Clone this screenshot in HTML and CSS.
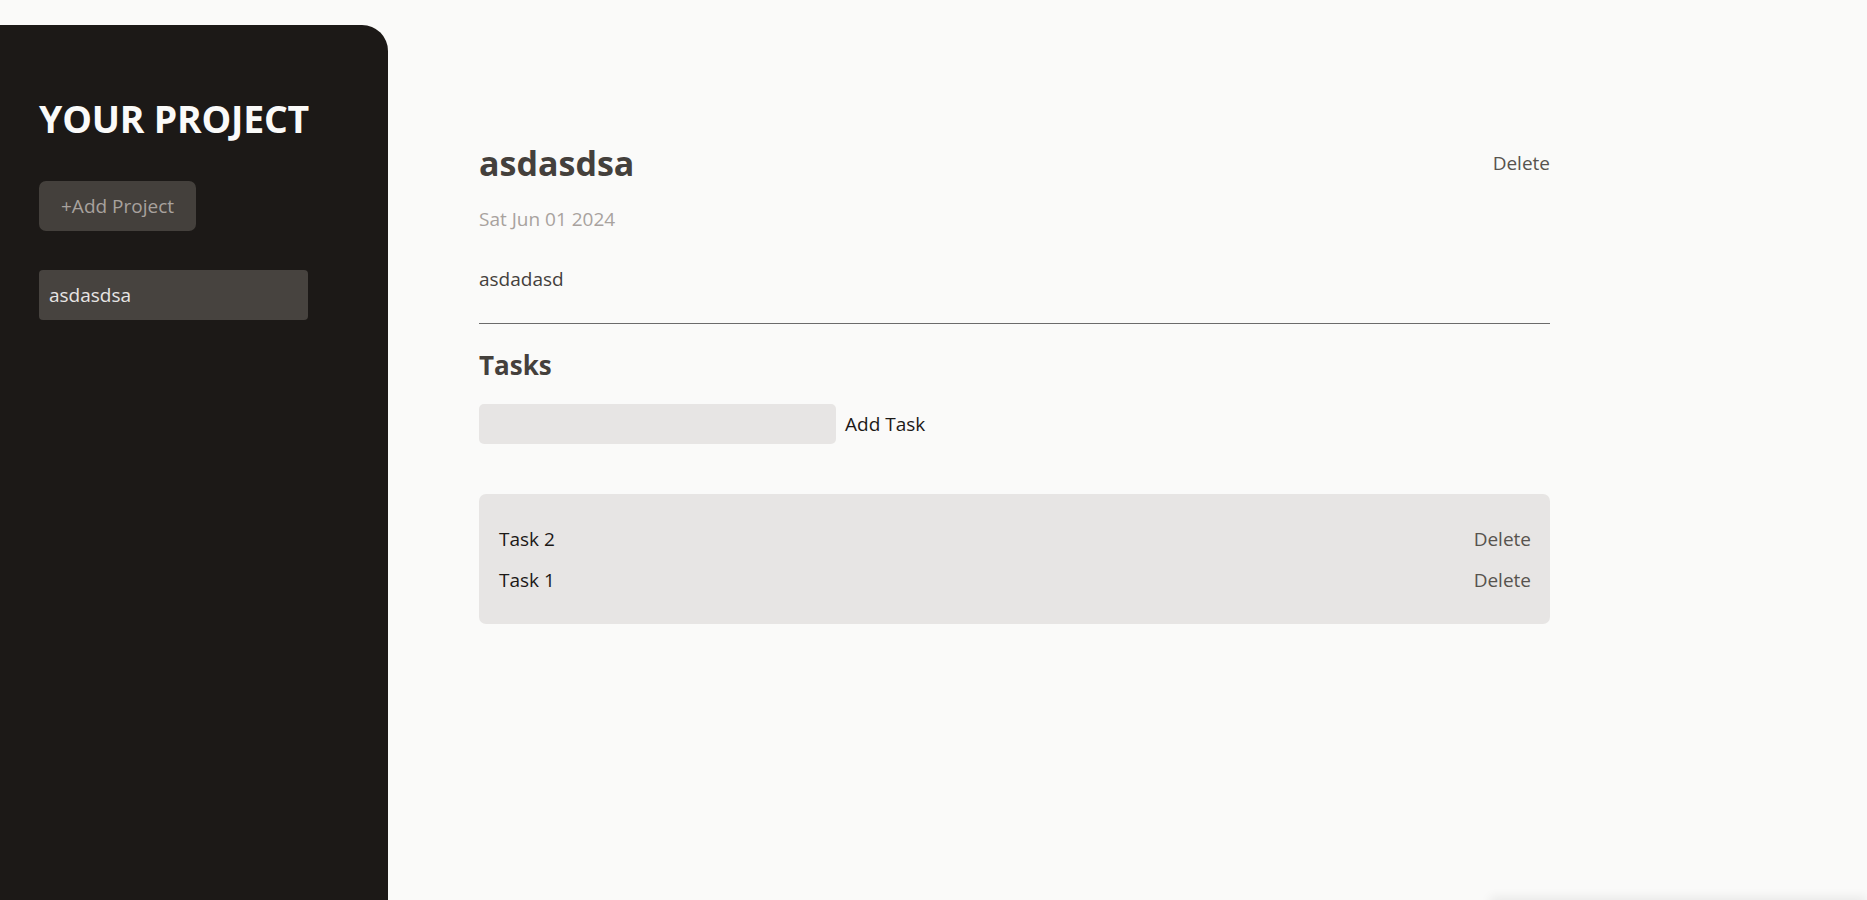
FILE: index.html
```html
<!DOCTYPE html>
<html lang="en">
<head>
<meta charset="utf-8">
<title>Project Manager</title>
<link rel="stylesheet" href="styles.css">
</head>
<body>
<div class="app">
  <aside class="sidebar">
    <h2 class="sidebar-title">YOUR PROJECT</h2>
    <button class="add-project">+Add Project</button>
    <ul class="project-list">
      <li><button class="project-item">asdasdsa</button></li>
    </ul>
  </aside>
  <main class="content">
    <header class="project-header">
      <div class="title-row">
        <h1 class="project-title">asdasdsa</h1>
        <button class="link-btn">Delete</button>
      </div>
      <p class="project-date">Sat Jun 01 2024</p>
      <p class="project-desc">asdadasd</p>
    </header>
    <section class="tasks">
      <h2 class="tasks-title">Tasks</h2>
      <div class="new-task">
        <input class="task-input" type="text">
        <button class="add-task">Add Task</button>
      </div>
      <ul class="task-list">
        <li class="task"><span>Task 2</span><button class="link-btn small">Delete</button></li>
        <li class="task"><span>Task 1</span><button class="link-btn small">Delete</button></li>
      </ul>
    </section>
  </main>
</div>
<div class="offscreen-panel"></div>
</body>
</html>
```

FILE: styles.css
```css
* { box-sizing: border-box; }
html, body { margin: 0; padding: 0; }
body {
  background: #fafaf9;
  font-family: "Open Sans", "Noto Sans", sans-serif;
  font-size: 19px;
  color: #1c1917;
  overflow: hidden;
}
button, input { font-family: inherit; font-size: inherit; }
ul { list-style: none; margin: 0; padding: 0; }
h1, h2, p { margin: 0; }

.app {
  display: flex;
  height: 900px;
}

.sidebar {
  width: 388px;
  flex: none;
  margin-top: 25px;
  background: #1c1917;
  border-top-right-radius: 26px;
  padding: 72px 39px 0 39px;
  display: flex;
  flex-direction: column;
  align-items: flex-start;
}
.sidebar-title {
  font-size: 37.4px;
  line-height: 44px;
  font-weight: 700;
  color: #fafaf9;
  letter-spacing: -0.2px;
}
.add-project {
  margin-top: 40px;
  height: 50px;
  padding: 0 22px;
  border: none;
  border-radius: 7px;
  background: #44403c;
  color: #a8a29e;
  line-height: 50px;
}
.project-list {
  margin-top: 39px;
  width: 269px;
}
.project-item {
  display: block;
  width: 100%;
  height: 50px;
  text-align: left;
  padding: 0 10px;
  border: none;
  border-radius: 4px;
  background: #47433f;
  color: #e7e5e4;
}

.content {
  margin-left: 91px;
  width: 1071px;
  padding-top: 141px;
}
.project-header {
  padding-bottom: 30px;
  border-bottom: 1px solid #6b6b6b;
}
.title-row {
  display: flex;
  align-items: center;
  justify-content: space-between;
}
.project-title {
  font-size: 34px;
  line-height: 44px;
  font-weight: 700;
  color: #44403c;
}
.link-btn {
  border: none;
  background: none;
  padding: 0;
  color: #57534e;
  line-height: 28px;
}
.project-date {
  margin-top: 20px;
  line-height: 28px;
  color: #a8a29e;
}
.project-desc {
  margin-top: 32px;
  line-height: 28px;
  color: #44403c;
}

.tasks-title {
  margin-top: 23px;
  font-size: 26px;
  line-height: 36px;
  font-weight: 700;
  color: #44403c;
}
.new-task {
  margin-top: 21px;
  display: flex;
  align-items: center;
  gap: 9px;
}
.task-input {
  width: 357px;
  height: 40px;
  border: none;
  border-radius: 5px;
  background: #e7e5e4;
  padding: 0 8px;
}
.add-task {
  border: none;
  background: none;
  padding: 0;
  color: #1c1917;
}
.task-list {
  margin-top: 50px;
  background: #e7e5e4;
  border-radius: 7px;
  padding: 31px 19px 30px 20px;
  display: flex;
  flex-direction: column;
  gap: 13px;
}
.task {
  display: flex;
  justify-content: space-between;
  align-items: center;
  line-height: 28px;
  color: #1c1917;
}

.offscreen-panel {
  position: fixed;
  left: 1490px;
  right: 0;
  top: 900px;
  height: 60px;
  background: #fafaf9;
  box-shadow: 0 -3px 10px rgba(0, 0, 0, 0.07);
}
```
